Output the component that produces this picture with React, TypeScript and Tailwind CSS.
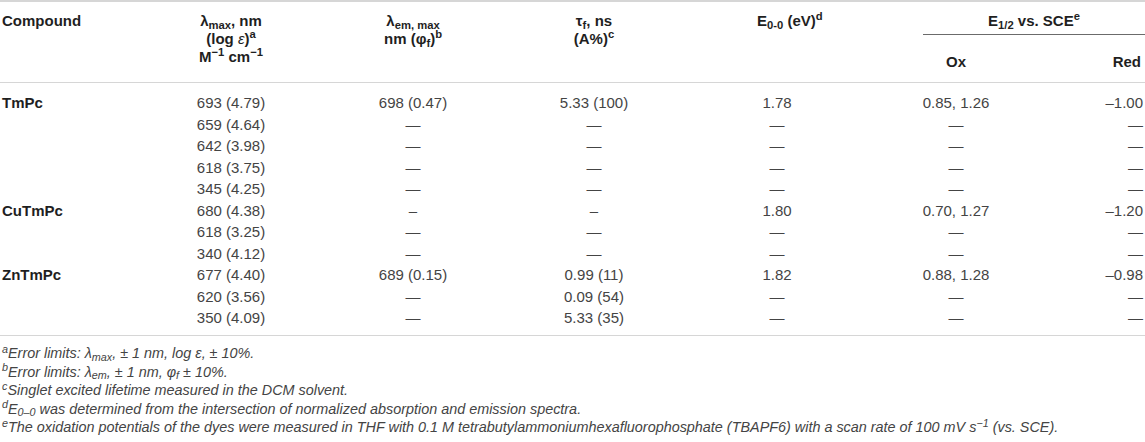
import React from "react";

const cols = "grid grid-cols-[140px_182px_182px_180px_186px_172px_1fr]";

type Row = { name?: string; cells: string[] };

const rows: Row[] = [
  { name: "TmPc", cells: ["693 (4.79)", "698 (0.47)", "5.33 (100)", "1.78", "0.85, 1.26", "–1.00"] },
  { cells: ["659 (4.64)", "—", "—", "—", "—", "—"] },
  { cells: ["642 (3.98)", "—", "—", "—", "—", "—"] },
  { cells: ["618 (3.75)", "—", "—", "—", "—", "—"] },
  { cells: ["345 (4.25)", "—", "—", "—", "—", "—"] },
  { name: "CuTmPc", cells: ["680 (4.38)", "–", "–", "1.80", "0.70, 1.27", "–1.20"] },
  { cells: ["618 (3.25)", "—", "—", "—", "—", "—"] },
  { cells: ["340 (4.12)", "—", "—", "—", "—", "—"] },
  { name: "ZnTmPc", cells: ["677 (4.40)", "689 (0.15)", "0.99 (11)", "1.82", "0.88, 1.28", "–0.98"] },
  { cells: ["620 (3.56)", "—", "0.09 (54)", "—", "—", "—"] },
  { cells: ["350 (4.09)", "—", "5.33 (35)", "—", "—", "—"] },
];

export default function App() {
  return (
    <div className="w-[1145px] h-[442px] bg-white overflow-hidden font-['Liberation_Sans',Arial,sans-serif]">
      {/* Header */}
      <div className={`${cols} h-[83px] border-t-2 border-b border-[#d6d6d6] text-[15px] leading-[18px] font-bold text-[#1f1f1f]`}>
        <div className="row-span-2 pt-[10px] pl-[2px]">Compound</div>
        <div className="row-span-2 pt-[10px] text-center">
          <div>
            λ<sub>max</sub>, nm
          </div>
          <div>
            (log <span className="font-normal italic">ε</span>)<sup>a</sup>
          </div>
          <div>
            M<sup>−1</sup> cm<sup>−1</sup>
          </div>
        </div>
        <div className="row-span-2 pt-[10px] text-center">
          <div>
            λ<sub>em, max</sub>
          </div>
          <div>
            nm (φ<sub>f</sub>)<sup>b</sup>
          </div>
        </div>
        <div className="row-span-2 pt-[10px] text-center">
          <div>
            τ<sub>f</sub>, ns
          </div>
          <div>
            (A%)<sup>c</sup>
          </div>
        </div>
        <div className="row-span-2 pt-[10px] pl-[73px]">
          E<sub>0-0</sub> (eV)<sup>d</sup>
        </div>
        <div className="col-span-2 pl-[53px]">
          <div className="pt-[10px] pb-[4px] text-center border-b border-[#6b6b6b]">
            E<sub>1/2</sub> vs. SCE<sup>e</sup>
          </div>
        </div>
        <div className="pt-[6px] text-center">Ox</div>
        <div className="pt-[6px] text-right pr-[4px]">Red</div>
      </div>

      {/* Body */}
      <div className="h-[253px] pt-[9px] border-b border-[#d6d6d6] text-[15px] leading-[21.5px] text-[#444]">
        {rows.map((r, i) => (
          <div key={i} className={cols}>
            <div className="pl-[2px] font-bold text-[#1f1f1f]">{r.name ?? ""}</div>
            {r.cells.slice(0, 4).map((c, j) => (
              <div key={j} className="text-center">
                {c}
              </div>
            ))}
            <div className="text-center">{r.cells[4]}</div>
            <div className="text-right pr-[2px]">{r.cells[5]}</div>
          </div>
        ))}
      </div>

      {/* Footnotes */}
      <div className="pt-[8px] pl-[2px] text-[14.4px] leading-[18.5px] italic text-[#444]">
        <p>
          <sup>a</sup>Error limits: λ<sub>max</sub>, ± 1 nm, log ε, ± 10%.
        </p>
        <p>
          <sup>b</sup>Error limits: λ<sub>em</sub>, ± 1 nm, φ<sub>f</sub> ± 10%.
        </p>
        <p>
          <sup>c</sup>Singlet excited lifetime measured in the DCM solvent.
        </p>
        <p>
          <sup>d</sup>E<sub>0–0</sub> was determined from the intersection of normalized absorption and emission spectra.
        </p>
        <p>
          <sup>e</sup>The oxidation potentials of the dyes were measured in THF with 0.1 M tetrabutylammoniumhexafluorophosphate (TBAPF6) with a scan rate of 100 mV s<sup>−1</sup> (vs. SCE).
        </p>
      </div>
    </div>
  );
}
